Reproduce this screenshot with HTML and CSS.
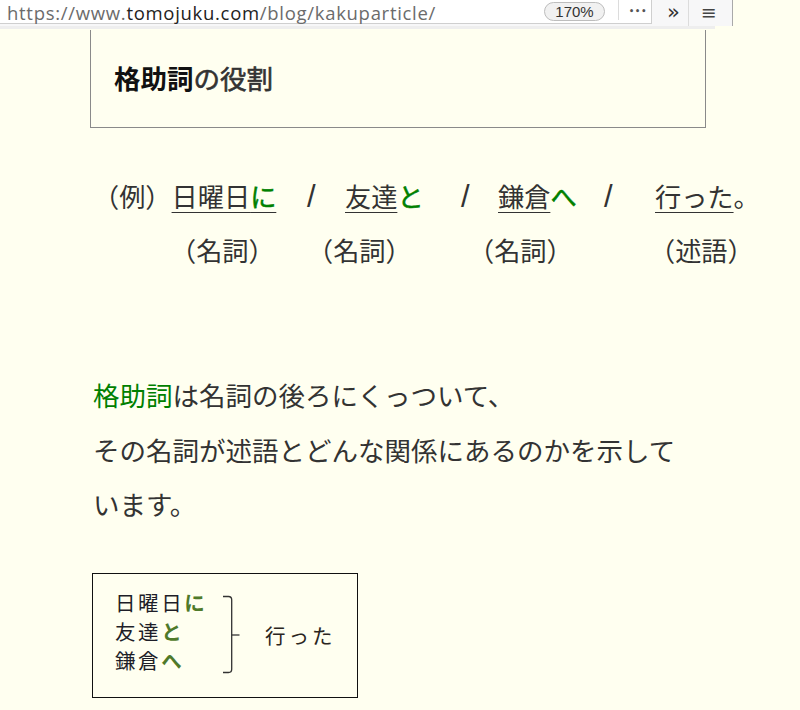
FILE: index.html
```html
<!DOCTYPE html>
<html lang="ja">
<head>
<meta charset="utf-8">
<title>格助詞の役割</title>
<link rel="stylesheet" href="styles.css">
</head>
<body>
<header class="chrome">
  <div class="toolbar">
    <div class="urlfield">
      <span class="url"><span class="dim">https://www.</span>tomojuku.com<span class="dim">/blog/kakuparticle/</span></span>
      <span class="zoom">170%</span>
      <span class="sep"></span>
      <span class="dots">•••</span>
    </div>
    <span class="chev">»</span>
    <span class="sep sep-tall"></span>
    <span class="menu">≡</span>
  </div>
  <div class="strip"></div>
</header>

<main class="article">
  <div class="headbox">
    <h2 class="headtitle"><span class="strong">格助詞</span><span class="soft">の役割</span></h2>
  </div>

  <div class="example">
    <div class="exrow">
      <span class="cell">（例）<span class="ul">日曜日<span class="pt">に</span></span></span>
      <span class="cell slash">/</span>
      <span class="cell"><span class="ul">友達</span><span class="pt">と</span></span>
      <span class="cell slash">/</span>
      <span class="cell"><span class="ul">鎌倉</span><span class="pt">へ</span></span>
      <span class="cell slash">/</span>
      <span class="cell"><span class="ul">行った</span>。</span>
    </div>
    <div class="exrow2">
      <span class="cell">（名詞）</span>
      <span class="cell">（名詞）</span>
      <span class="cell">（名詞）</span>
      <span class="cell">（述語）</span>
    </div>
  </div>

  <p class="para"><span class="green">格助詞</span>は名詞の後ろにくっついて、<br>その名詞が述語とどんな関係にあるのかを示しています。</p>

  <div class="figure">
    <div class="fig-list">
      <div>日曜日<b class="fpt">に</b></div>
      <div>友達<b class="fpt">と</b></div>
      <div>鎌倉<b class="fpt">へ</b></div>
    </div>
    <svg class="brace" width="20" height="80" viewBox="0 0 20 80" aria-hidden="true">
      <path d="M1 1.5 H6.5 Q9.7 1.5 9.7 4.7 V74.3 Q9.7 77.5 6.5 77.5 H1" fill="none" stroke="#333" stroke-width="1.3"/>
      <path d="M9.7 40 H17.5" fill="none" stroke="#333" stroke-width="1.3"/>
    </svg>
    <div class="fig-pred">行った</div>
  </div>
</main>
</body>
</html>
```

FILE: styles.css
```css
html, body {
  margin: 0;
  padding: 0;
}
body {
  background: #fffff0;
  font-family: "Noto Sans CJK JP", "Noto Sans", sans-serif;
  color: #333;
  width: 800px;
  height: 710px;
  overflow: hidden;
}

/* browser chrome */
.chrome {
  height: 29px;
}
.toolbar {
  width: 732px;
  height: 26px;
  background: #f7f7f8;
  border-right: 1px solid #a9a9a9;
  display: flex;
  align-items: flex-start;
}
.urlfield {
  width: 651px;
  height: 23px;
  background: #fff;
  border-right: 1px solid #cfcfcf;
  border-bottom: 1px solid #cfcfcf;
  display: flex;
  align-items: flex-start;
  flex: none;
}
.url {
  font-family: "Open Sans", "Liberation Sans", sans-serif;
  font-size: 18.5px;
  line-height: 25px;
  height: 23px;
  letter-spacing: 0.7px;
  color: #222;
  padding-left: 7px;
  white-space: nowrap;
  width: 537px;
  flex: none;
}
.dim {
  color: #6b6b6b;
}
.zoom {
  flex: none;
  align-self: center;
  width: 59px;
  height: 17px;
  border: 1px solid #bdbdbd;
  border-radius: 10px;
  background: #f1f1f1;
  font-family: "Liberation Sans", sans-serif;
  font-size: 15px;
  line-height: 17px;
  text-align: center;
  color: #333;
}
.sep {
  flex: none;
  width: 1px;
  height: 20px;
  background: #dcdcdc;
  margin-left: 13px;
  align-self: flex-start;
}
.sep-tall {
  height: 26px;
  margin-left: 8px;
}
.dots {
  flex: none;
  align-self: center;
  font-family: "DejaVu Sans", sans-serif;
  font-size: 8px;
  font-weight: bold;
  letter-spacing: 1px;
  color: #555;
  margin-left: 10px;
}
.chev {
  flex: none;
  font-family: "DejaVu Sans", sans-serif;
  font-size: 21px;
  line-height: 25px;
  height: 25px;
  color: #333;
  margin-left: 15px;
}
.menu {
  flex: none;
  font-family: "DejaVu Sans", sans-serif;
  font-size: 19px;
  line-height: 24px;
  height: 24px;
  color: #444;
  margin-left: 12px;
}
.strip {
  width: 715px;
  height: 3px;
  background: #eeeeee;
}

/* article */
.article {
  padding-left: 90px;
}
.headbox {
  width: 614px;
  height: 97px;
  border: 1px solid #8a8a8a;
  border-top: none;
  margin-top: 1px;
}
.headtitle {
  margin: 0;
  padding: 30px 0 0 23px;
  font-size: 26.5px;
  line-height: 36px;
  font-weight: normal;
  color: #333;
}
.strong {
  color: #111;
  font-weight: bold;
}
.soft {
  -webkit-text-stroke: 0.6px #333;
}

.example {
  margin-top: 41px;
  padding-left: 3px;
  font-size: 26.2px;
  line-height: 55px;
  color: #333;
}
.exrow {
  display: grid;
  grid-template-columns: 214px 38px 116px 37px 106px 51px auto;
  white-space: nowrap;
}
.exrow2 {
  display: grid;
  grid-template-columns: 137px 161px 181px auto;
  padding-left: 77px;
  white-space: nowrap;
  margin-top: -1px;
}
.ul {
  text-decoration: underline;
  text-decoration-thickness: 1px;
  text-underline-offset: 5px;
}
.pt {
  color: #008000;
  -webkit-text-stroke: 0.5px #008000;
}
.slash {
  font-family: "Liberation Sans", sans-serif;
  font-size: 31px;
  color: #333;
}

.para {
  margin: 90px 0 0 0;
  padding-left: 3px;
  width: 596px;
  font-size: 26.5px;
  line-height: 54.5px;
  color: #333;
}
.green {
  color: #008000;
}

.figure {
  margin: 41px 0 0 2px;
  width: 264px;
  height: 123px;
  border: 1px solid #111;
  display: flex;
  align-items: center;
}
.fig-list {
  margin-left: 22px;
  margin-bottom: 8px;
  width: 107px;
  font-size: 20.5px;
  line-height: 29px;
  letter-spacing: 2.6px;
  color: #1e1e28;
}
.fpt {
  color: #4f7a2a;
  font-weight: bold;
}
.brace {
  flex: none;
  display: block;
}
.fig-pred {
  margin-left: 23px;
  font-size: 20.5px;
  letter-spacing: 3px;
  color: #2a2520;
}
```
